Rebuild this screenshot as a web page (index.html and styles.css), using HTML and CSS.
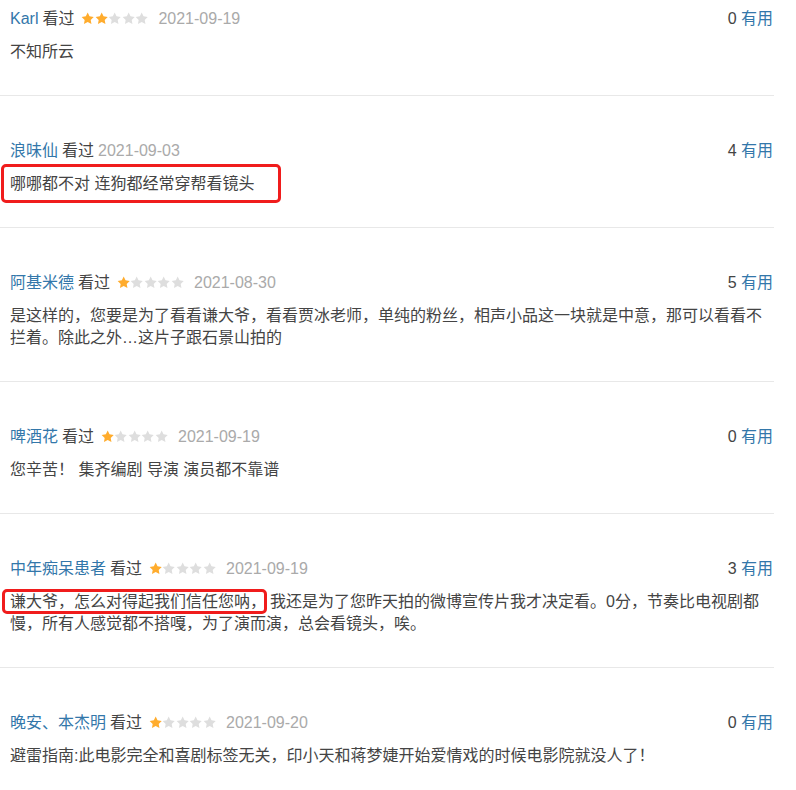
FILE: index.html
```html
<!DOCTYPE html>
<html lang="zh-CN">
<head>
<meta charset="utf-8">
<link rel="stylesheet" href="styles.css">
</head>
<body>
<svg width="0" height="0" class="defs">
  <defs>
    <path id="star" d="M12 1l3.3 6.8 7.5 1.1-5.4 5.25 1.3 7.45L12 18.1l-6.7 3.5 1.3-7.45L1.2 8.9l7.5-1.1z"/>
  </defs>
</svg>
<div class="list">
  <div class="review">
    <div class="head">
      <div class="meta">
        <span class="name">Karl</span><span class="watched">看过</span>
        <span class="stars"><svg viewBox="0 0 24 24" class="on"><use href="#star"/></svg><svg viewBox="0 0 24 24" class="on"><use href="#star"/></svg><svg viewBox="0 0 24 24"><use href="#star"/></svg><svg viewBox="0 0 24 24"><use href="#star"/></svg><svg viewBox="0 0 24 24"><use href="#star"/></svg></span>
        <span class="date">2021-09-19</span>
      </div>
      <div class="votes"><span class="count">0</span> 有用</div>
    </div>
    <p class="text">不知所云</p>
  </div>

  <div class="review">
    <div class="head">
      <div class="meta">
        <span class="name">浪味仙</span><span class="watched">看过</span>
        <span class="date nostars">2021-09-03</span>
      </div>
      <div class="votes"><span class="count">4</span> 有用</div>
    </div>
    <p class="text"><span class="mark mark-a">哪哪都不对 连狗都经常穿帮看镜头</span></p>
  </div>

  <div class="review">
    <div class="head">
      <div class="meta">
        <span class="name">阿基米德</span><span class="watched">看过</span>
        <span class="stars"><svg viewBox="0 0 24 24" class="on"><use href="#star"/></svg><svg viewBox="0 0 24 24"><use href="#star"/></svg><svg viewBox="0 0 24 24"><use href="#star"/></svg><svg viewBox="0 0 24 24"><use href="#star"/></svg><svg viewBox="0 0 24 24"><use href="#star"/></svg></span>
        <span class="date">2021-08-30</span>
      </div>
      <div class="votes"><span class="count">5</span> 有用</div>
    </div>
    <p class="text">是这样的，您要是为了看看谦大爷，看看贾冰老师，单纯的粉丝，相声小品这一块就是中意，那可以看看不拦着。除此之外…这片子跟石景山拍的</p>
  </div>

  <div class="review">
    <div class="head">
      <div class="meta">
        <span class="name">啤酒花</span><span class="watched">看过</span>
        <span class="stars"><svg viewBox="0 0 24 24" class="on"><use href="#star"/></svg><svg viewBox="0 0 24 24"><use href="#star"/></svg><svg viewBox="0 0 24 24"><use href="#star"/></svg><svg viewBox="0 0 24 24"><use href="#star"/></svg><svg viewBox="0 0 24 24"><use href="#star"/></svg></span>
        <span class="date">2021-09-19</span>
      </div>
      <div class="votes"><span class="count">0</span> 有用</div>
    </div>
    <p class="text">您辛苦！ 集齐编剧 导演 演员都不靠谱</p>
  </div>

  <div class="review">
    <div class="head">
      <div class="meta">
        <span class="name">中年痴呆患者</span><span class="watched">看过</span>
        <span class="stars"><svg viewBox="0 0 24 24" class="on"><use href="#star"/></svg><svg viewBox="0 0 24 24"><use href="#star"/></svg><svg viewBox="0 0 24 24"><use href="#star"/></svg><svg viewBox="0 0 24 24"><use href="#star"/></svg><svg viewBox="0 0 24 24"><use href="#star"/></svg></span>
        <span class="date">2021-09-19</span>
      </div>
      <div class="votes"><span class="count">3</span> 有用</div>
    </div>
    <p class="text"><span class="mark mark-b">谦大爷，怎么对得起我们信任您呐，</span>我还是为了您昨天拍的微博宣传片我才决定看。0分，节奏比电视剧都慢，所有人感觉都不搭嘎，为了演而演，总会看镜头，唉。</p>
  </div>

  <div class="review">
    <div class="head">
      <div class="meta">
        <span class="name">晚安、本杰明</span><span class="watched">看过</span>
        <span class="stars"><svg viewBox="0 0 24 24" class="on"><use href="#star"/></svg><svg viewBox="0 0 24 24"><use href="#star"/></svg><svg viewBox="0 0 24 24"><use href="#star"/></svg><svg viewBox="0 0 24 24"><use href="#star"/></svg><svg viewBox="0 0 24 24"><use href="#star"/></svg></span>
        <span class="date">2021-09-20</span>
      </div>
      <div class="votes"><span class="count">0</span> 有用</div>
    </div>
    <p class="text">避雷指南:此电影完全和喜剧标签无关，印小天和蒋梦婕开始爱情戏的时候电影院就没人了！</p>
  </div>
</div>
</body>
</html>
```

FILE: styles.css
```css
html, body {
  margin: 0;
  padding: 0;
  background: #fff;
}

body {
  font-family: "Liberation Sans", "Noto Sans CJK SC", sans-serif;
  font-size: 16px;
  color: #444;
}

.defs {
  position: absolute;
  width: 0;
  height: 0;
}

.list {
  width: 774px;
}

.review {
  padding: 45px 1px 32px 10px;
  border-bottom: 1px solid #e8e8e8;
}

.review:first-child {
  padding-top: 9px;
}

.review:last-child {
  border-bottom: none;
}

.head {
  display: flex;
  justify-content: space-between;
  align-items: center;
  height: 20px;
  line-height: 20px;
}

.meta {
  display: flex;
  align-items: center;
  white-space: nowrap;
}

.name {
  color: #3377aa;
}

.watched {
  margin-left: 4px;
  color: #444;
}

.stars {
  display: inline-flex;
  align-items: center;
  margin-left: 7px;
}

.stars svg {
  width: 13.4px;
  height: 13.4px;
  fill: #dedede;
  display: block;
}

.stars svg.on {
  fill: #ffac2d;
}

.date {
  margin-left: 10px;
  color: #aaaaaa;
}

.date.nostars {
  margin-left: 4px;
}

.votes {
  color: #3377aa;
}

.votes .count {
  color: #444;
}

.text {
  margin: 12px 7px 0 0;
  line-height: 22px;
  color: #444;
}

.mark {
  position: relative;
}

.mark-b {
  margin-right: 4px;
}

.mark::after {
  content: "";
  position: absolute;
  border: 3px solid #f01c1c;
  border-radius: 5px;
  pointer-events: none;
}

.mark-a::after {
  left: -9px;
  right: -27px;
  top: -11px;
  bottom: -11px;
}

.mark-b::after {
  left: -8px;
  right: -1px;
  top: -4px;
  bottom: -4px;
}
```
